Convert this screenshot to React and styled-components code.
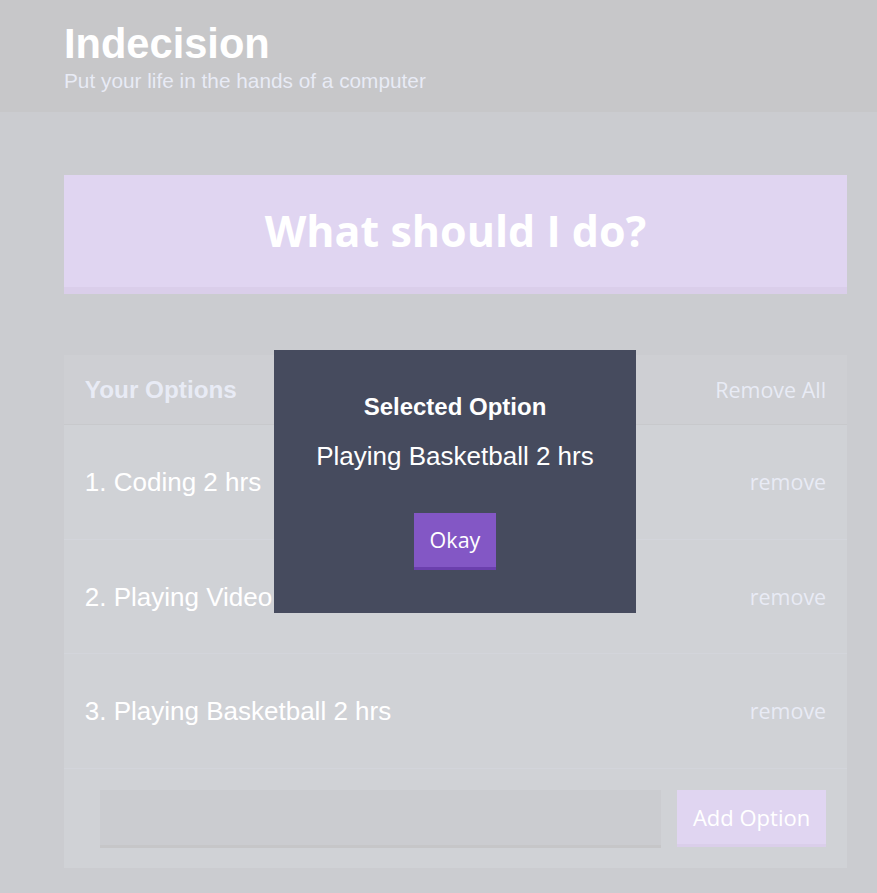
import styled, { createGlobalStyle } from "styled-components"

const options = ["Coding 2 hrs", "Playing Video Games 1 hr", "Playing Basketball 2 hrs"]
const selectedOption = "Playing Basketball 2 hrs"

const GlobalStyle = createGlobalStyle`
  * { box-sizing: border-box; }
  html { font-size: 13px; }
  body {
    margin: 0;
    background: #333745;
    font-family: "Liberation Sans", Arial, sans-serif;
    font-size: 1.6rem;
    overflow: hidden;
  }
  button { cursor: pointer; }
`

const App = () => {
  return (
    <>
      <GlobalStyle />
      <Header>
        <Container>
          <Title>Indecision</Title>
          <Subtitle>Put your life in the hands of a computer</Subtitle>
        </Container>
      </Header>
      <Container>
        <BigButton>What should I do?</BigButton>
        <Widget>
          <WidgetHeader>
            <WidgetTitle>Your Options</WidgetTitle>
            <LinkButton>Remove All</LinkButton>
          </WidgetHeader>
          {options.map((val, idx) => (
            <OptionRow key={idx}>
              <OptionText>{idx + 1}. {val}</OptionText>
              <LinkButton>remove</LinkButton>
            </OptionRow>
          ))}
          <AddOptionForm onSubmit={(e) => e.preventDefault()}>
            <AddOptionInput type="text" name="option" />
            <Button $wide>Add Option</Button>
          </AddOptionForm>
        </Widget>
      </Container>
      <Overlay>
        <Modal>
          <ModalTitle>Selected Option</ModalTitle>
          <ModalBody>{selectedOption}</ModalBody>
          <Button>Okay</Button>
        </Modal>
      </Overlay>
    </>
  )
}

export default App

const Header = styled.div`
  background: #20222b;
  margin-bottom: 63px;
  padding: 20px 0 19px;
`

const Container = styled.div`
  width: 783px;
  margin-left: 64px;
`

const Title = styled.h1`
  color: #fff;
  font-size: 3.2rem;
  line-height: 47px;
  margin: 0;
`

const Subtitle = styled.h2`
  color: #a5afd7;
  font-size: 1.6rem;
  font-weight: 500;
  line-height: 24px;
  margin: 2px 0 0;
`

const BigButton = styled.button`
  display: block;
  width: 100%;
  background: #8357c5;
  border: none;
  border-bottom: 0.6rem solid #6b3fad;
  color: #fff;
  font-family: "Open Sans", sans-serif;
  font-weight: 700;
  font-size: 43px;
  line-height: 50px;
  padding: 2.4rem;
  margin-bottom: 61px;
`

const Widget = styled.div`
  background: #464b5e;
  margin-bottom: 4.8rem;
`

const WidgetHeader = styled.div`
  background: #3c4251;
  color: #a5afd7;
  display: flex;
  justify-content: space-between;
  align-items: center;
  padding: 1.6rem;
  height: 70px;
  border-bottom: 1px solid #272b35;
`

const WidgetTitle = styled.h3`
  margin: 0;
  font-size: 24.3px;
`

const LinkButton = styled.button`
  background: none;
  border: none;
  color: #a5afd7;
  padding: 0;
  font-family: "Open Sans", sans-serif;
  font-size: 21.5px;
  line-height: 28px;
`

const OptionRow = styled.div`
  display: flex;
  justify-content: space-between;
  align-items: center;
  padding: 0 1.6rem;
  height: 114.5px;
  border-bottom: 1px solid #515a6f;
`

const OptionText = styled.p`
  color: #fff;
  font-weight: 500;
  font-size: 2rem;
  line-height: 30px;
  margin: 0;
`

const AddOptionForm = styled.form`
  display: flex;
  padding: 1.6rem 1.6rem 1.6rem 36px;
`

const AddOptionInput = styled.input`
  background: #333745;
  border: none;
  border-bottom: 0.3rem solid #1d1f27;
  color: #a5afd7;
  flex-grow: 1;
  margin-right: 16px;
  padding: 1.2rem;
  height: 58px;
  outline: none;
`

const Button = styled.button`
  background: #8357c5;
  border: none;
  border-bottom: 0.3rem solid #6b3fad;
  color: #fff;
  font-family: "Open Sans", sans-serif;
  font-weight: 500;
  font-size: ${(p) => (p.$wide ? "22px" : "21.5px")};
  line-height: 26px;
  height: 57px;
  padding: 0 ${(p) => (p.$wide ? "16px" : "15.6px")};
`

const Overlay = styled.div`
  position: fixed;
  top: 0;
  left: 0;
  width: 910px;
  height: 963px;
  background: rgba(255, 255, 255, 0.75);
  display: flex;
  align-items: center;
  justify-content: center;
`

const Modal = styled.div`
  background: #464b5e;
  color: #fff;
  max-width: 30rem;
  padding: 41.6px 42.6px 43px;
  text-align: center;
`

const ModalTitle = styled.h3`
  margin: 0 0 1.6rem 0;
  font-size: 24px;
  line-height: 29px;
`

const ModalBody = styled.p`
  font-size: 2rem;
  font-weight: 300;
  line-height: 30px;
  margin: 0 0 3.2rem 0;
  white-space: nowrap;
`
